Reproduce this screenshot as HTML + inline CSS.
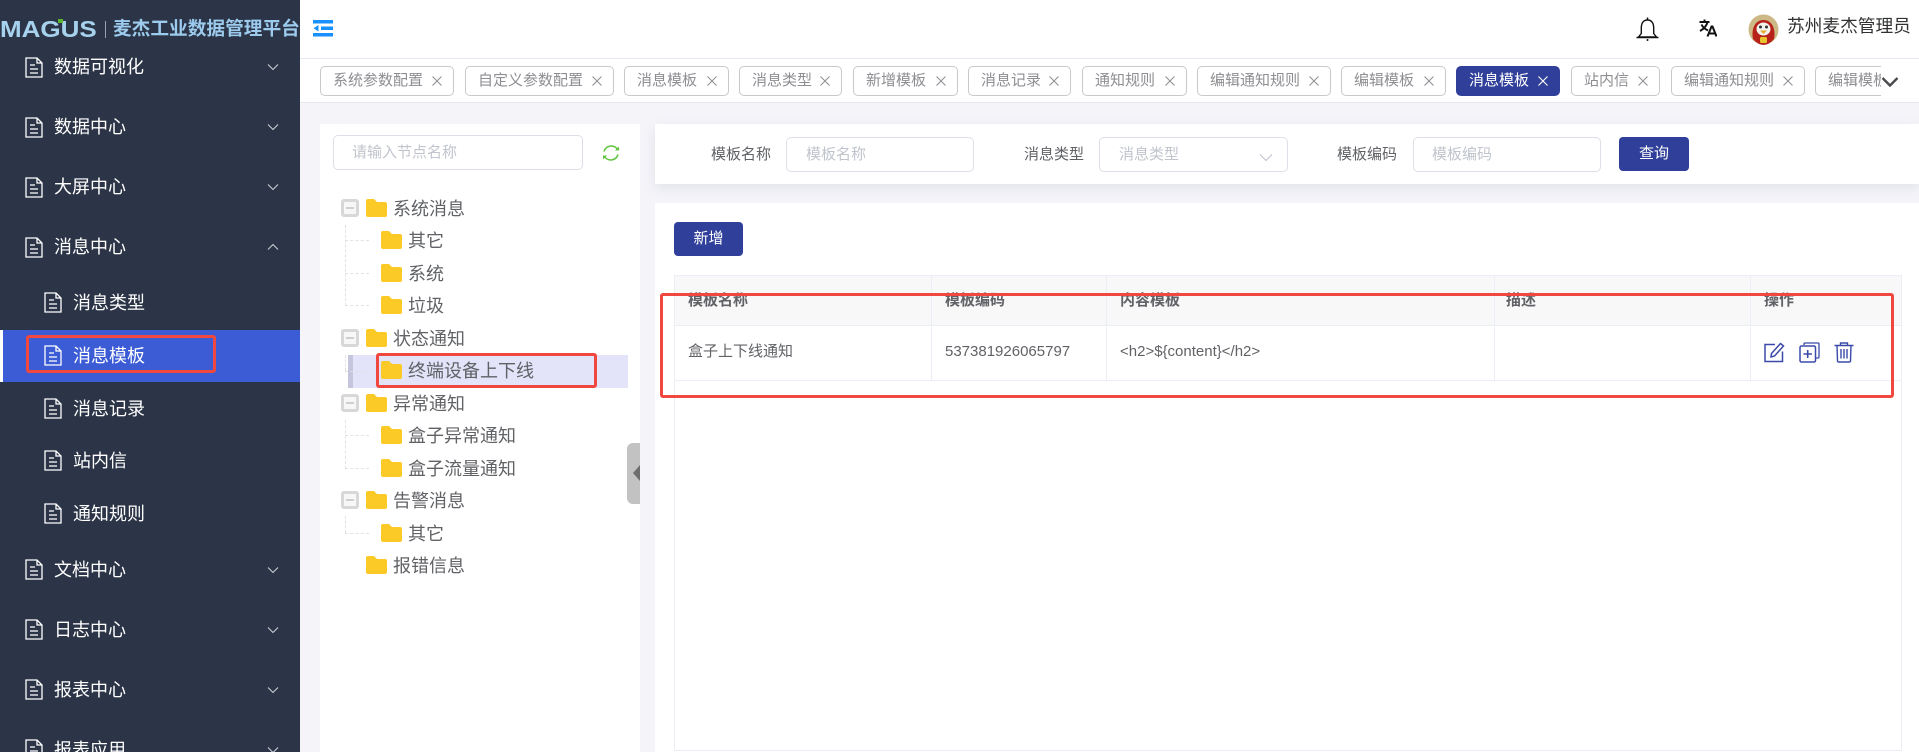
<!DOCTYPE html>
<html lang="zh-CN"><head><meta charset="utf-8"><title>消息模板</title>
<style>
*{box-sizing:border-box}
html,body{margin:0;padding:0;width:1919px;height:752px;overflow:hidden;background:#f4f4f9;font-family:"Liberation Sans","Noto Sans CJK SC",sans-serif}
div,span,svg{position:absolute}
.t{white-space:nowrap;line-height:24px;height:24px}
.m{color:#fff;font-size:18px;left:54px}
.s{color:#fff;font-size:18px;left:73px}
.ic{width:18px;height:21px}
.chev{left:267px;width:12px;height:8px}
.tab{top:7px;height:30px;border:1px solid #c9c9cd;border-radius:5px;background:#fff;color:#8e8e93;font-size:15px;line-height:28px;white-space:nowrap;padding-left:12px}
.tab i{position:absolute;right:10px;top:8px;width:12px;height:12px}
.tab.on{background:#30409a;border-color:#30409a;color:#fff}
.n{font-size:18px;color:#606266}
.fo{width:21px;height:18px}
.inp{border:1px solid #dcdfe6;border-radius:5px;background:#fff;height:35px}
.ph{font-size:15px;color:#c0c4cc}
.lb{font-size:15px;color:#606266}
.btn{background:#30409a;border-radius:4px;color:#fff;font-size:15px;text-align:center}
.box{left:341px;width:18px;height:18px;border:3px solid #d8d8d8;border-radius:3px;background:#f7f7f7}
.box b{position:absolute;left:2px;right:2px;top:5px;height:2px;background:#cfcfcf}
.dv{border-left:1px dashed #e2e2e2;width:0;left:345px}
.dh{border-top:1px dashed #e2e2e2;height:0;left:345px;width:24px}
.vl{background:#ebeef5;width:1px;top:275px;height:475px}
.th{font-size:15px;font-weight:bold;color:#606266;top:289px}
.td{font-size:15px;color:#606266;top:340px}
.red{border:3px solid #f0483e;border-radius:3px}
</style></head><body>
<svg width="0" height="0" style="position:absolute"><defs>
<symbol id="doc" viewBox="0 0 18 21"><path d="M1 1H12L17 6V20H1Z M12 1V6H17 M5 8H10 M5 12H13 M5 16H13" fill="none" stroke="#fff" stroke-width="1.300"/></symbol>
<symbol id="dn" viewBox="0 0 12 8"><path d="M1 1.500L6 6.500L11 1.500" fill="none" stroke="#c8ccd4" stroke-width="1.100"/></symbol>
<symbol id="x" viewBox="0 0 12 12"><path d="M1.500 1.500L10.500 10.500M10.500 1.500L1.500 10.500" stroke="#8e8e93" stroke-width="1"/></symbol>
<symbol id="xw" viewBox="0 0 12 12"><path d="M1.500 1.500L10.500 10.500M10.500 1.500L1.500 10.500" stroke="#fff" stroke-width="1.100"/></symbol>
<symbol id="fd" viewBox="0 0 21 18"><path d="M0 2Q0 0 2 0H8L11 3H19Q21 3 21 5V16Q21 18 19 18H2Q0 18 0 16Z" fill="#fbca26"/></symbol>
</defs></svg>

<!-- sidebar -->
<div style="left:0;top:0;width:300px;height:752px;background:#2c3547;overflow:hidden">
 <div style="left:0;top:330px;width:300px;height:52px;background:#3c5cd6"></div>
 <div style="left:0;top:330px;width:3px;height:52px;background:#fff"></div>
 <span class="t" style="left:0;top:17px;font-size:23px;font-weight:bold;color:#a6d2ee;line-height:24px;transform-origin:0 50%;transform:scaleX(1.130)">MAGUS</span>
 <div style="left:58px;top:19px;width:5px;height:4px;background:#5cb531"></div>
 <div style="left:105px;top:21px;width:1px;height:17px;background:#9aa3b0"></div>
 <span class="t" style="left:113px;top:17px;font-size:18.7px;font-weight:bold;color:#9ccbee">麦杰工业数据管理平台</span>

 <svg class="ic" style="left:25px;top:57px"><use href="#doc"/></svg><span class="t m" style="top:55px">数据可视化</span><svg class="chev" style="top:63px"><use href="#dn"/></svg>
 <svg class="ic" style="left:25px;top:117px"><use href="#doc"/></svg><span class="t m" style="top:115px">数据中心</span><svg class="chev" style="top:123px"><use href="#dn"/></svg>
 <svg class="ic" style="left:25px;top:177px"><use href="#doc"/></svg><span class="t m" style="top:175px">大屏中心</span><svg class="chev" style="top:183px"><use href="#dn"/></svg>
 <svg class="ic" style="left:25px;top:237px"><use href="#doc"/></svg><span class="t m" style="top:235px">消息中心</span><svg class="chev" style="top:243px;transform:scaleY(-1)"><use href="#dn"/></svg>
 <svg class="ic" style="left:44px;top:292px"><use href="#doc"/></svg><span class="t s" style="top:291px">消息类型</span>
 <svg class="ic" style="left:44px;top:345px"><use href="#doc"/></svg><span class="t s" style="top:344px">消息模板</span>
 <svg class="ic" style="left:44px;top:398px"><use href="#doc"/></svg><span class="t s" style="top:397px">消息记录</span>
 <svg class="ic" style="left:44px;top:450px"><use href="#doc"/></svg><span class="t s" style="top:449px">站内信</span>
 <svg class="ic" style="left:44px;top:503px"><use href="#doc"/></svg><span class="t s" style="top:502px">通知规则</span>
 <svg class="ic" style="left:25px;top:559px"><use href="#doc"/></svg><span class="t m" style="top:558px">文档中心</span><svg class="chev" style="top:566px"><use href="#dn"/></svg>
 <svg class="ic" style="left:25px;top:619px"><use href="#doc"/></svg><span class="t m" style="top:618px">日志中心</span><svg class="chev" style="top:626px"><use href="#dn"/></svg>
 <svg class="ic" style="left:25px;top:679px"><use href="#doc"/></svg><span class="t m" style="top:678px">报表中心</span><svg class="chev" style="top:686px"><use href="#dn"/></svg>
 <svg class="ic" style="left:25px;top:739px"><use href="#doc"/></svg><span class="t m" style="top:738px">报表应用</span><svg class="chev" style="top:746px"><use href="#dn"/></svg>
 <div class="red" style="left:26px;top:335px;width:190px;height:38px"></div>
</div>

<!-- header -->
<div style="left:300px;top:0;width:1619px;height:59px;background:#fff;border-bottom:1px solid #e4e8f4"></div>
<svg style="left:313px;top:20px" width="20" height="17" viewBox="0 0 20 17"><path d="M0 0H20V3.500H0Z M8 6.500H20V10H8Z M0 13H20V16.500H0Z M5.500 5V11.500L0.500 8.200Z" fill="#1890ff"/></svg>
<svg style="left:1636px;top:17px" width="23" height="24" viewBox="0 0 23 24"><path d="M11.500 3C6.800 3 5.300 7 5.300 11V16.500L2.500 20H20.500L17.700 16.500V11C17.700 7 16.200 3 11.500 3Z M0.500 20.500H22.500" fill="none" stroke="#111" stroke-width="1.400"/><path d="M11.500 0.500V3" stroke="#111" stroke-width="1.500"/><circle cx="11.500" cy="23" r="1" fill="#111"/></svg>
<svg style="left:1699px;top:19px" width="18" height="18" viewBox="0 0 18 18"><path d="M0.500 3H10.500 M5.500 0.500V3 M8.500 3C7.500 7.500 4.500 10 1 12 M2.500 5.500C3.800 8.500 6 10 9 11.500" fill="none" stroke="#111" stroke-width="1.900"/><path d="M8.500 17.500L12.500 7.500H13.500L17.500 17.500 M10 14.500H16" fill="none" stroke="#111" stroke-width="2"/></svg>
<svg style="left:1748px;top:14px" width="31" height="31" viewBox="0 0 31 31"><circle cx="15.500" cy="15.500" r="15" fill="#cdb986"/><path d="M5 25C3 15 7 6 15.500 6S28 15 26 25Q21 31 15.500 31T5 25Z" fill="#b8201a"/><ellipse cx="15.500" cy="15" rx="7" ry="6.500" fill="#f2f2ee"/><circle cx="12.500" cy="13" r="1.500" fill="#333"/><circle cx="18.500" cy="13" r="1.500" fill="#333"/><path d="M12 16.500H19L15.500 20Z" fill="#e9a92a"/><rect x="12" y="23" width="7" height="6" rx="1.500" fill="#e8c52c"/></svg>
<span class="t" style="left:1787px;top:14px;font-size:17.700px;color:#303133">苏州麦杰管理员</span>

<!-- tabs -->
<div style="left:300px;top:59px;width:1619px;height:44px;background:#fff;border-bottom:1px solid #e6e8f0"></div>
<div style="left:300px;top:59px;width:1581px;height:43px;overflow:hidden">
 <div class="tab" style="left:20px;width:134px">系统参数配置<i><svg width="12" height="12"><use href="#x"/></svg></i></div>
 <div class="tab" style="left:165px;width:149px">自定义参数配置<i><svg width="12" height="12"><use href="#x"/></svg></i></div>
 <div class="tab" style="left:324px;width:105px">消息模板<i><svg width="12" height="12"><use href="#x"/></svg></i></div>
 <div class="tab" style="left:439px;width:103px">消息类型<i><svg width="12" height="12"><use href="#x"/></svg></i></div>
 <div class="tab" style="left:553px;width:105px">新增模板<i><svg width="12" height="12"><use href="#x"/></svg></i></div>
 <div class="tab" style="left:668px;width:103px">消息记录<i><svg width="12" height="12"><use href="#x"/></svg></i></div>
 <div class="tab" style="left:782px;width:105px">通知规则<i><svg width="12" height="12"><use href="#x"/></svg></i></div>
 <div class="tab" style="left:897px;width:134px">编辑通知规则<i><svg width="12" height="12"><use href="#x"/></svg></i></div>
 <div class="tab" style="left:1041px;width:105px">编辑模板<i><svg width="12" height="12"><use href="#x"/></svg></i></div>
 <div class="tab on" style="left:1156px;width:104px">消息模板<i><svg width="12" height="12"><use href="#xw"/></svg></i></div>
 <div class="tab" style="left:1271px;width:89px">站内信<i><svg width="12" height="12"><use href="#x"/></svg></i></div>
 <div class="tab" style="left:1371px;width:134px">编辑通知规则<i><svg width="12" height="12"><use href="#x"/></svg></i></div>
 <div class="tab" style="left:1515px;width:105px">编辑模板<i><svg width="12" height="12"><use href="#x"/></svg></i></div>
</div>
<svg style="left:1881px;top:76px" width="18" height="12" viewBox="0 0 18 12"><path d="M1.500 2L9 9.500L16.500 2" fill="none" stroke="#4a4a4f" stroke-width="2.400"/></svg>

<!-- tree panel -->
<div style="left:320px;top:124px;width:320px;height:628px;background:#fff"></div>
<div class="inp" style="left:333px;top:135px;width:250px"></div>
<span class="t ph" style="left:352px;top:141px">请输入节点名称</span>
<svg style="left:602px;top:144px" width="18" height="18" viewBox="0 0 18 18"><path d="M2 7.500A7.500 7.500 0 0 1 15.500 5.500 M16 10.500A7.500 7.500 0 0 1 2.500 12.500" fill="none" stroke="#5fc43c" stroke-width="1.500"/><path d="M13 6.500H17V2.500Z M5 11.500H1V15.500Z" fill="#5fc43c"/></svg>

<div style="left:348px;top:355px;width:280px;height:33px;background:#e3e3f9"></div>
<div style="left:348px;top:355px;width:5px;height:33px;background:#c5c5de"></div>

<div class="dv" style="top:225px;height:81px"></div>
<div class="dh" style="top:240px"></div><div class="dh" style="top:273px"></div><div class="dh" style="top:305px"></div>
<div class="dv" style="top:355px;height:16px"></div><div class="dh" style="top:371px"></div>
<div class="dv" style="top:420px;height:49px"></div>
<div class="dh" style="top:435px"></div><div class="dh" style="top:468px"></div>
<div class="dv" style="top:516px;height:17px"></div><div class="dh" style="top:533px"></div>

<div class="box" style="top:199px"><b></b></div><svg class="fo" style="left:366px;top:199px"><use href="#fd"/></svg><span class="t n" style="left:393px;top:197px">系统消息</span>
<svg class="fo" style="left:381px;top:231px"><use href="#fd"/></svg><span class="t n" style="left:408px;top:229px">其它</span>
<svg class="fo" style="left:381px;top:264px"><use href="#fd"/></svg><span class="t n" style="left:408px;top:262px">系统</span>
<svg class="fo" style="left:381px;top:296px"><use href="#fd"/></svg><span class="t n" style="left:408px;top:294px">垃圾</span>
<div class="box" style="top:329px"><b></b></div><svg class="fo" style="left:366px;top:329px"><use href="#fd"/></svg><span class="t n" style="left:393px;top:327px">状态通知</span>
<svg class="fo" style="left:381px;top:361px"><use href="#fd"/></svg><span class="t n" style="left:408px;top:359px">终端设备上下线</span>
<div class="box" style="top:394px"><b></b></div><svg class="fo" style="left:366px;top:394px"><use href="#fd"/></svg><span class="t n" style="left:393px;top:392px">异常通知</span>
<svg class="fo" style="left:381px;top:426px"><use href="#fd"/></svg><span class="t n" style="left:408px;top:424px">盒子异常通知</span>
<svg class="fo" style="left:381px;top:459px"><use href="#fd"/></svg><span class="t n" style="left:408px;top:457px">盒子流量通知</span>
<div class="box" style="top:491px"><b></b></div><svg class="fo" style="left:366px;top:491px"><use href="#fd"/></svg><span class="t n" style="left:393px;top:489px">告警消息</span>
<svg class="fo" style="left:381px;top:524px"><use href="#fd"/></svg><span class="t n" style="left:408px;top:522px">其它</span>
<svg class="fo" style="left:366px;top:556px"><use href="#fd"/></svg><span class="t n" style="left:393px;top:554px">报错信息</span>
<div class="red" style="left:376px;top:353px;width:221px;height:35px"></div>

<div style="left:627px;top:443px;width:13px;height:61px;background:#c2c2c2;border-radius:6px 0 0 6px"></div>
<div style="left:633px;top:465px;width:0;height:0;border:8px solid transparent;border-left:0;border-right:7px solid #6e6e6e"></div>

<!-- filter card -->
<div style="left:655px;top:124px;width:1264px;height:60px;background:#fff;box-shadow:0 4px 12px rgba(120,125,150,.14)"></div>
<span class="t lb" style="left:711px;top:143px">模板名称</span>
<div class="inp" style="left:786px;top:137px;width:188px"></div>
<span class="t ph" style="left:806px;top:143px">模板名称</span>
<span class="t lb" style="left:1024px;top:143px">消息类型</span>
<div class="inp" style="left:1099px;top:137px;width:189px"></div>
<span class="t ph" style="left:1119px;top:143px">消息类型</span>
<svg style="left:1259px;top:153px" width="14" height="9" viewBox="0 0 14 9"><path d="M1 1.500L7 7.500L13 1.500" fill="none" stroke="#c0c4cc" stroke-width="1.100"/></svg>
<span class="t lb" style="left:1337px;top:143px">模板编码</span>
<div class="inp" style="left:1413px;top:137px;width:188px"></div>
<span class="t ph" style="left:1432px;top:143px">模板编码</span>
<div class="btn" style="left:1619px;top:137px;width:70px;height:34px;line-height:33px">查询</div>

<!-- table card -->
<div style="left:655px;top:203px;width:1264px;height:549px;background:#fff"></div>
<div class="btn" style="left:674px;top:222px;width:69px;height:34px;line-height:33px">新增</div>
<div style="left:674px;top:275px;width:1228px;height:476px;border:1px solid #ebeef5;background:#fff"></div>
<div style="left:675px;top:276px;width:1226px;height:49px;background:#f8f8f9"></div>
<div style="left:675px;top:325px;width:1226px;height:1px;background:#ebeef5"></div>
<div style="left:675px;top:380px;width:1226px;height:1px;background:#ebeef5"></div>
<div class="vl" style="left:931px;height:105px"></div>
<div class="vl" style="left:1106px;height:105px"></div>
<div class="vl" style="left:1494px;height:105px"></div>
<div class="vl" style="left:1750px;height:105px"></div>
<span class="t th" style="left:688px">模板名称</span>
<span class="t th" style="left:945px">模板编码</span>
<span class="t th" style="left:1120px">内容模板</span>
<span class="t th" style="left:1506px">描述</span>
<span class="t th" style="left:1764px">操作</span>
<span class="t td" style="left:688px">盒子上下线通知</span>
<span class="t td" style="left:945px">537381926065797</span>
<span class="t td" style="left:1120px">&lt;h2&gt;${content}&lt;/h2&gt;</span>
<svg style="left:1764px;top:342px" width="21" height="21" viewBox="0 0 21 21"><path d="M11 2.500H1V19.500H18.500V9.500" fill="none" stroke="#3a4aa8" stroke-width="1.500"/><path d="M7.500 11.500L16.500 1.500L19.500 4L10.500 14L7 15Z" fill="none" stroke="#3a4aa8" stroke-width="1.500"/></svg>
<svg style="left:1799px;top:342px" width="21" height="21" viewBox="0 0 21 21"><path d="M5 3V2Q5 1 6 1H19Q20 1 20 2V15Q20 16 19 16H17" fill="none" stroke="#3a4aa8" stroke-width="1.300"/><rect x="1" y="4" width="15.500" height="16" rx="1.500" fill="#fff" stroke="#3a4aa8" stroke-width="1.500"/><path d="M4.500 12H13 M8.700 8V16" stroke="#3a4aa8" stroke-width="1.600"/></svg>
<svg style="left:1834px;top:342px" width="20" height="21" viewBox="0 0 20 21"><path d="M0.500 3.500H19.500 M6.500 3.500V1H13.500V3.500 M3 3.500L3.500 19Q3.500 20 5 20H15Q16.500 20 16.500 19L17 3.500" fill="none" stroke="#3a4aa8" stroke-width="1.400"/><path d="M7 7V16.500 M10 7V16.500 M13 7V16.500" stroke="#3a4aa8" stroke-width="1.400"/></svg>
<div class="red" style="left:660px;top:293px;width:1234px;height:105px"></div>
</body></html>
